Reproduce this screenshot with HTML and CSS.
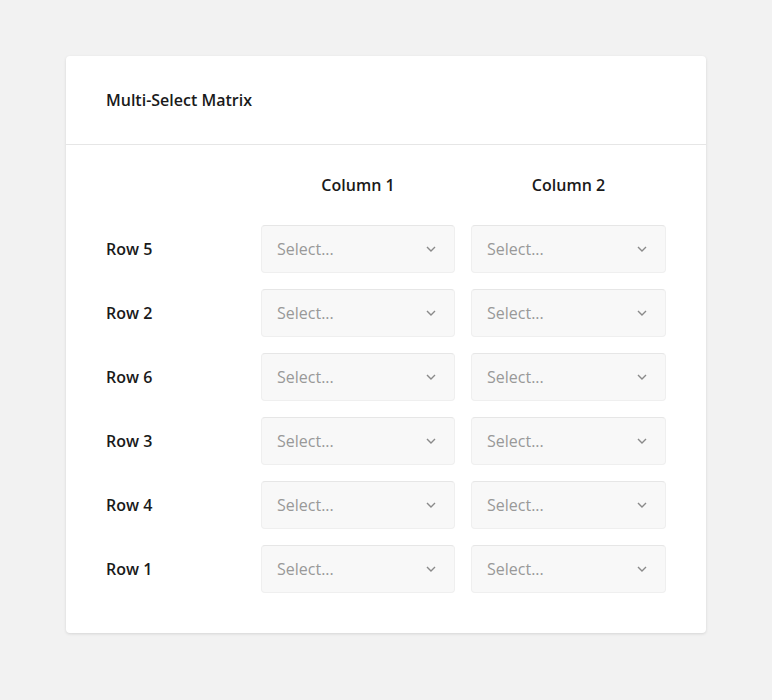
FILE: index.html
```html
<!DOCTYPE html>
<html>
<head>
<meta charset="utf-8">
<link rel="stylesheet" href="styles.css">
</head>
<body>
<div class="card">
  <div class="card-header">Multi-Select Matrix</div>
  <div class="card-body">
    <div class="matrix">
      <div class="corner"></div>
      <div class="col-head">Column 1</div>
      <div class="col-head">Column 2</div>

      <div class="row-label">Row 5</div>
      <div class="select"><span>Select...</span><svg class="chev" width="10" height="6" viewBox="0 0 10 6"><path d="M1 1l4 4 4-4" fill="none" stroke="#8a8a8a" stroke-width="1.4"/></svg></div>
      <div class="select"><span>Select...</span><svg class="chev" width="10" height="6" viewBox="0 0 10 6"><path d="M1 1l4 4 4-4" fill="none" stroke="#8a8a8a" stroke-width="1.4"/></svg></div>

      <div class="row-label">Row 2</div>
      <div class="select"><span>Select...</span><svg class="chev" width="10" height="6" viewBox="0 0 10 6"><path d="M1 1l4 4 4-4" fill="none" stroke="#8a8a8a" stroke-width="1.4"/></svg></div>
      <div class="select"><span>Select...</span><svg class="chev" width="10" height="6" viewBox="0 0 10 6"><path d="M1 1l4 4 4-4" fill="none" stroke="#8a8a8a" stroke-width="1.4"/></svg></div>

      <div class="row-label">Row 6</div>
      <div class="select"><span>Select...</span><svg class="chev" width="10" height="6" viewBox="0 0 10 6"><path d="M1 1l4 4 4-4" fill="none" stroke="#8a8a8a" stroke-width="1.4"/></svg></div>
      <div class="select"><span>Select...</span><svg class="chev" width="10" height="6" viewBox="0 0 10 6"><path d="M1 1l4 4 4-4" fill="none" stroke="#8a8a8a" stroke-width="1.4"/></svg></div>

      <div class="row-label">Row 3</div>
      <div class="select"><span>Select...</span><svg class="chev" width="10" height="6" viewBox="0 0 10 6"><path d="M1 1l4 4 4-4" fill="none" stroke="#8a8a8a" stroke-width="1.4"/></svg></div>
      <div class="select"><span>Select...</span><svg class="chev" width="10" height="6" viewBox="0 0 10 6"><path d="M1 1l4 4 4-4" fill="none" stroke="#8a8a8a" stroke-width="1.4"/></svg></div>

      <div class="row-label">Row 4</div>
      <div class="select"><span>Select...</span><svg class="chev" width="10" height="6" viewBox="0 0 10 6"><path d="M1 1l4 4 4-4" fill="none" stroke="#8a8a8a" stroke-width="1.4"/></svg></div>
      <div class="select"><span>Select...</span><svg class="chev" width="10" height="6" viewBox="0 0 10 6"><path d="M1 1l4 4 4-4" fill="none" stroke="#8a8a8a" stroke-width="1.4"/></svg></div>

      <div class="row-label">Row 1</div>
      <div class="select"><span>Select...</span><svg class="chev" width="10" height="6" viewBox="0 0 10 6"><path d="M1 1l4 4 4-4" fill="none" stroke="#8a8a8a" stroke-width="1.4"/></svg></div>
      <div class="select"><span>Select...</span><svg class="chev" width="10" height="6" viewBox="0 0 10 6"><path d="M1 1l4 4 4-4" fill="none" stroke="#8a8a8a" stroke-width="1.4"/></svg></div>
    </div>
  </div>
</div>
</body>
</html>
```
FILE: styles.css
```css
html, body {
  margin: 0;
  padding: 0;
}
body {
  background: #f2f2f2;
  font-family: "Open Sans", "Noto Sans", sans-serif;
  color: #1a1a1a;
  padding: 56px 66px 0 66px;
  height: 700px;
  box-sizing: border-box;
}
.card {
  width: 640px;
  background: #fff;
  border-radius: 4px;
  box-shadow: 0 1px 3px rgba(0,0,0,0.12);
}
.card-header {
  height: 89px;
  box-sizing: border-box;
  padding: 0 40px;
  display: flex;
  align-items: center;
  font-size: 16px;
  font-weight: 600;
  border-bottom: 1px solid #e6e6e6;
}
.card-body {
  padding: 28px 40px 40px;
}
.matrix {
  display: grid;
  grid-template-columns: 139px 194px 195px;
  column-gap: 16px;
  row-gap: 16px;
  align-items: center;
}
.col-head {
  text-align: center;
  font-size: 16px;
  font-weight: 600;
  height: 24px;
  line-height: 24px;
  margin-bottom: 12px;
}
.corner {
  height: 24px;
  margin-bottom: 12px;
}
.row-label {
  font-size: 16px;
  font-weight: 600;
}
.select {
  height: 48px;
  box-sizing: border-box;
  background: #f8f8f8;
  border: 1px solid #efefef;
  border-top-color: #e6e6e6;
  border-radius: 4px;
  display: flex;
  align-items: center;
  justify-content: space-between;
  padding: 0 18px 0 15px;
  font-size: 16px;
  color: #999;
}
.chev {
  display: block;
}
```
